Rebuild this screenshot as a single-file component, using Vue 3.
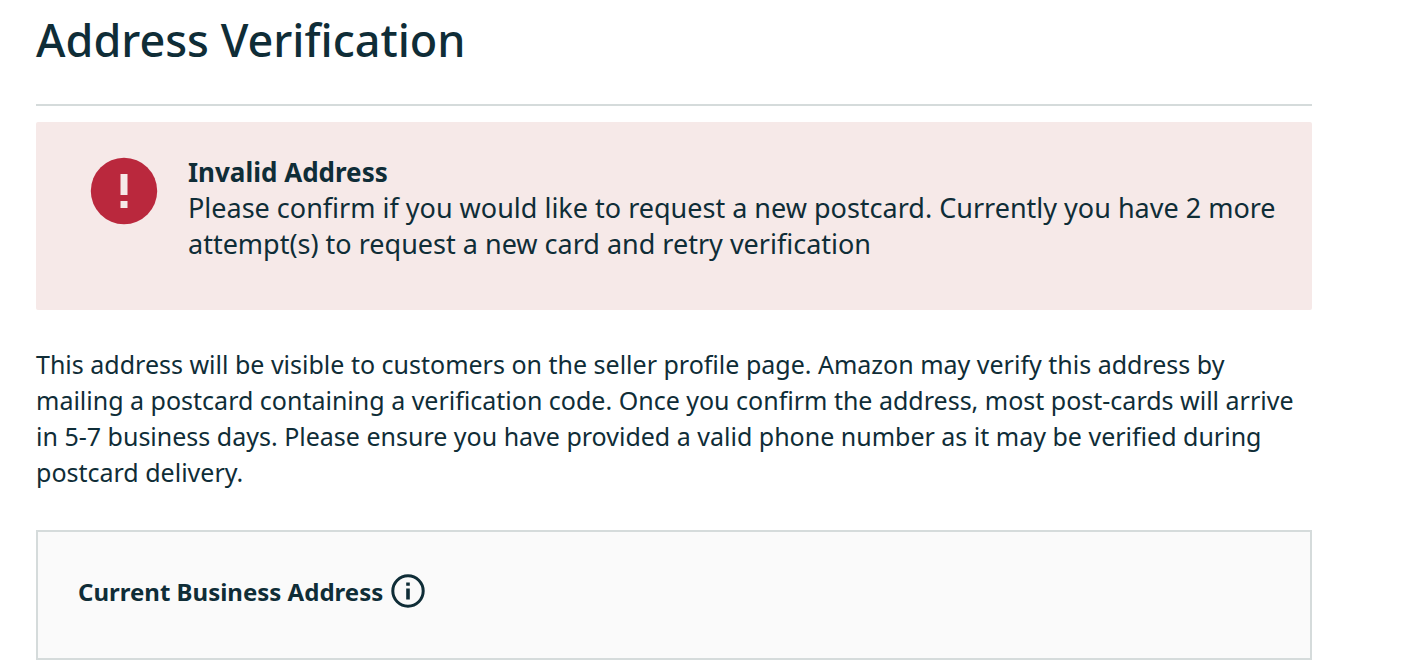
<script setup>
const details = 'This address will be visible to customers on the seller profile page. Amazon may verify this address by mailing a postcard containing a verification code. Once you confirm the address, most post-cards will arrive in 5-7 business days. Please ensure you have provided a valid phone number as it may be verified during postcard delivery.'
</script>

<template>
  <main class="page">
    <h1 class="title">Address Verification</h1>
    <section class="alert" role="alert">
      <svg class="alert-icon" viewBox="0 0 68 68" aria-hidden="true">
        <circle cx="34" cy="34" r="33.2" fill="#ba283d" />
        <path d="M30.5 17h7v21h-7zM30.5 44h7v7h-7z" fill="#f6e9e8" />
      </svg>
      <div class="alert-body">
        <h2 class="alert-title">Invalid Address</h2>
        <p class="alert-text">Please confirm if you would like to request a new postcard. Currently you have 2 more attempt(s) to request a new card and retry verification</p>
      </div>
    </section>
    <p class="details">{{ details }}</p>
    <section class="card">
      <h2 class="card-title">Current Business Address</h2>
      <button class="info" type="button" aria-label="About the current business address">
        <svg viewBox="0 0 34 34" aria-hidden="true">
          <circle cx="17" cy="17" r="15.2" fill="none" stroke="#0f2d37" stroke-width="3" />
          <path d="M15.2 8.5h3.6v3.2h-3.6zM15.2 14.5h3.6v11h-3.6z" fill="#0f2d37" />
        </svg>
      </button>
    </section>
  </main>
</template>

<style>
body {
  background: #fff;
}
</style>

<style scoped>
.page {
  margin: 0 106px 0 36px;
  color: #0f2d37;
  font-family: "Noto Sans", "Open Sans", sans-serif;
  font-size: 25px;
  line-height: 36px;
}
.title {
  margin: 0 0 16px;
  padding: 6px 0 30px;
  border-bottom: 2px solid #d5dbdb;
  font-size: 45px;
  font-weight: 500;
  line-height: 68px;
}
.alert {
  display: flex;
  gap: 30px;
  padding: 32px 32px 48px 54px;
  background: #f6e9e8;
  border-radius: 2px;
}
.alert-icon {
  flex: none;
  width: 68px;
  height: 68px;
  margin-top: 3px;
}
.alert-title {
  margin: 0;
  font-size: 26px;
  font-weight: 700;
}
.alert-text {
  margin: 0;
  font-size: 27px;
}
.details {
  margin: 36px 0 40px;
}
.card {
  display: flex;
  align-items: flex-start;
  gap: 8px;
  padding: 42px 40px 48px;
  background: #fafafa;
  border: 2px solid #d5dbdb;
}
.card-title {
  margin: 0;
  font-size: 24px;
  font-weight: 700;
}
.info {
  flex: none;
  width: 34px;
  height: 34px;
  padding: 0;
  border: 0;
  background: none;
  cursor: pointer;
}
.info svg {
  display: block;
  width: 34px;
  height: 34px;
}
</style>
